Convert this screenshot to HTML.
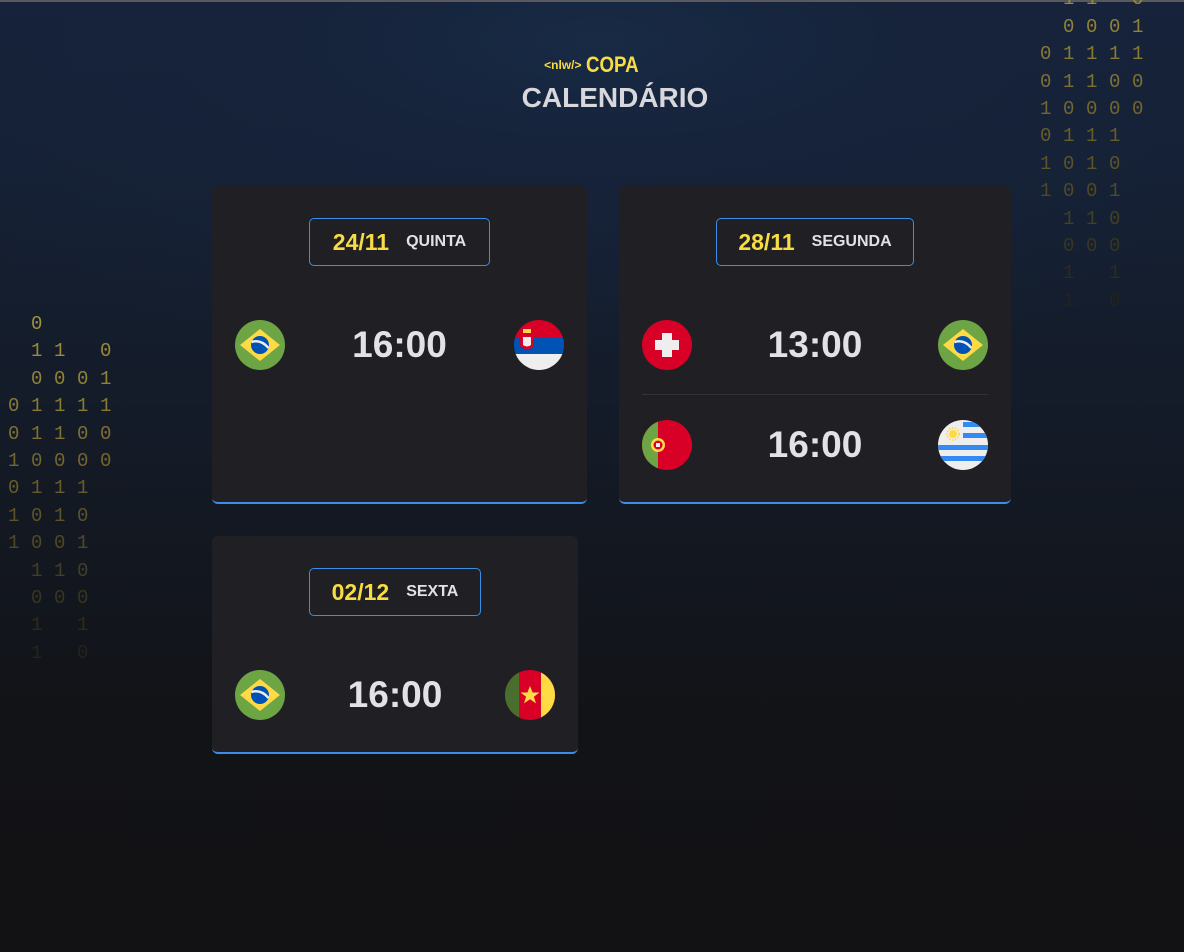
<!DOCTYPE html>
<html style="background:#121214"><head><meta charset="utf-8"><style>
*{margin:0;padding:0;box-sizing:border-box}
html,body{width:1184px;height:952px;overflow:hidden}
body{position:relative;font-family:"Liberation Sans",sans-serif;
background:radial-gradient(ellipse 900px 320px at 600px 40px,#182a45 0%,#16233a 35%,transparent 100%),linear-gradient(180deg,#15233a 0%,#141c2a 40%,#121317 75%,#121214 100%);}
.topline{position:absolute;left:0;top:0;width:1184px;height:2px;background:#5a5a5e}
.bin{position:absolute;font-family:"Liberation Mono","DejaVu Sans Mono",monospace;font-size:19px;line-height:27.4px}
.bin div{height:27.4px;white-space:pre;letter-spacing:0.1px}
.logo{position:absolute;left:0;width:1184px;top:52px;text-align:center;color:#f7dd43;font-weight:bold}
.logo .s{font-size:12px;vertical-align:3px}
.logo .c{font-size:22px;display:inline-block;transform:scaleX(0.85);transform-origin:left;margin-right:-8px}
h1{position:absolute;left:0;width:1230px;top:82px;text-align:center;color:#d8d8dc;font-size:28px;font-weight:bold}
.card{position:absolute;background:#202024;border-radius:6px;border-bottom:2px solid #3a8ee6}
.date{position:absolute;top:32px;height:48px;border:1px solid #3a8ee6;border-radius:5px;display:flex;align-items:center;justify-content:center;gap:17px}
.date b{color:#f7dd43;font-size:23px}
.date span{color:#e1e1e6;font-size:16px;font-weight:bold}
.row{position:absolute;left:23px;right:23px;height:50px;display:flex;align-items:center;justify-content:space-between}
.t{color:#e1e1e6;font-size:37px;font-weight:bold}
.sep{position:absolute;left:23px;right:23px;height:1px;background:#323238}
svg{display:block}
</style></head><body>
<div class="topline"></div>
<div class="bin" style="left:8px;top:311px"><div style="color:#a2923a">  0</div><div style="color:#9a8a38">  1 1   0</div><div style="color:#918236">  0 0 0 1</div><div style="color:#877a34">0 1 1 1 1</div><div style="color:#7d7131">0 1 1 0 0</div><div style="color:#72672e">1 0 0 0 0</div><div style="color:#675d2b">0 1 1 1</div><div style="color:#5c5428">1 0 1 0</div><div style="color:#504925">1 0 0 1</div><div style="color:#443f22">  1 1 0</div><div style="color:#39351f">  0 0 0</div><div style="color:#2e2b1c">  1   1</div><div style="color:#25231a">  1   0</div></div>
<div class="bin" style="left:1040px;top:-41px"><div style="color:#a2923a">  0</div><div style="color:#9a8a38">  1 1   0</div><div style="color:#918236">  0 0 0 1</div><div style="color:#877a34">0 1 1 1 1</div><div style="color:#7d7131">0 1 1 0 0</div><div style="color:#72672e">1 0 0 0 0</div><div style="color:#675d2b">0 1 1 1</div><div style="color:#5c5428">1 0 1 0</div><div style="color:#504925">1 0 0 1</div><div style="color:#443f22">  1 1 0</div><div style="color:#39351f">  0 0 0</div><div style="color:#2e2b1c">  1   1</div><div style="color:#25231a">  1   0</div></div>
<div class="logo"><span class="s">&lt;nlw/&gt;</span> <span class="c">COPA</span></div>
<h1>CALENDÁRIO</h1>

<svg width="0" height="0" style="position:absolute"><defs>
<symbol id="br" viewBox="0 0 50 50"><circle cx="25" cy="25" r="25" fill="#6da544"/><path d="M25 9 L45 25 L25 41 L5 25Z" fill="#ffda44"/><circle cx="25" cy="25" r="9" fill="#0052b4"/><path d="M16.5 22 Q26 19 33.5 28" stroke="#eee" stroke-width="2.5" fill="none"/></symbol>
<symbol id="rs" viewBox="0 0 50 50"><clipPath id="c1"><circle cx="25" cy="25" r="25"/></clipPath><g clip-path="url(#c1)"><rect width="50" height="17" fill="#d80027"/><rect y="17" width="50" height="17" fill="#0052b4"/><rect y="34" width="50" height="16" fill="#eee"/></g><path d="M6 14h14v12q-7 7-14 0z" fill="#d80027"/><path d="M9 17h8v8q-4 3-8 0z" fill="#eee"/><rect x="9" y="9" width="8" height="4" fill="#ffda44"/></symbol>
<symbol id="ch" viewBox="0 0 50 50"><circle cx="25" cy="25" r="25" fill="#d80027"/><path d="M20 13h10v7h7v10h-7v7h-10v-7h-7v-10h7z" fill="#eee"/></symbol>
<symbol id="pt" viewBox="0 0 50 50"><clipPath id="c2"><circle cx="25" cy="25" r="25"/></clipPath><g clip-path="url(#c2)"><rect width="50" height="50" fill="#d80027"/><rect width="16" height="50" fill="#6da544"/></g><circle cx="16" cy="25" r="7" fill="#ffda44"/><circle cx="16" cy="25" r="4.5" fill="#d80027"/><rect x="14" y="23" width="4" height="4" fill="#eee"/></symbol>
<symbol id="uy" viewBox="0 0 50 50"><clipPath id="c3"><circle cx="25" cy="25" r="25"/></clipPath><g clip-path="url(#c3)"><rect width="50" height="50" fill="#eee"/><rect x="25" y="2" width="25" height="5" fill="#338af3"/><rect x="25" y="13" width="25" height="5" fill="#338af3"/><rect y="25" width="50" height="5" fill="#338af3"/><rect y="36" width="50" height="5" fill="#338af3"/></g><circle cx="15" cy="14" r="4" fill="#ffda44"/><circle cx="15" cy="14" r="6" fill="none" stroke="#ffda44" stroke-width="2" stroke-dasharray="1.5 1.5"/></symbol>
<symbol id="cm" viewBox="0 0 50 50"><clipPath id="c4"><circle cx="25" cy="25" r="25"/></clipPath><g clip-path="url(#c4)"><rect width="50" height="50" fill="#d80027"/><rect width="14" height="50" fill="#496e2d"/><rect x="36" width="14" height="50" fill="#ffda44"/></g><path d="M25 16l2.6 6.5h6.8l-5.5 4.2 2.1 6.7-6-4.1-6 4.1 2.1-6.7-5.5-4.2h6.8z" fill="#ffda44"/></symbol>
</defs></svg>

<div class="card" style="left:212px;top:186px;width:375px;height:318px">
 <div class="date" style="left:97px;width:181px"><b>24/11</b><span>QUINTA</span></div>
 <div class="row" style="top:134px"><svg width="50" height="50"><use href="#br"/></svg><span class="t">16:00</span><svg width="50" height="50"><use href="#rs"/></svg></div>
</div>
<div class="card" style="left:619px;top:186px;width:392px;height:318px">
 <div class="date" style="left:97px;width:198px"><b>28/11</b><span>SEGUNDA</span></div>
 <div class="row" style="top:134px"><svg width="50" height="50"><use href="#ch"/></svg><span class="t">13:00</span><svg width="50" height="50"><use href="#br"/></svg></div>
 <div class="sep" style="top:208px"></div>
 <div class="row" style="top:234px"><svg width="50" height="50"><use href="#pt"/></svg><span class="t">16:00</span><svg width="50" height="50"><use href="#uy"/></svg></div>
</div>
<div class="card" style="left:212px;top:536px;width:366px;height:218px">
 <div class="date" style="left:97px;width:172px"><b>02/12</b><span>SEXTA</span></div>
 <div class="row" style="top:134px"><svg width="50" height="50"><use href="#br"/></svg><span class="t">16:00</span><svg width="50" height="50"><use href="#cm"/></svg></div>
</div>
</body></html>
